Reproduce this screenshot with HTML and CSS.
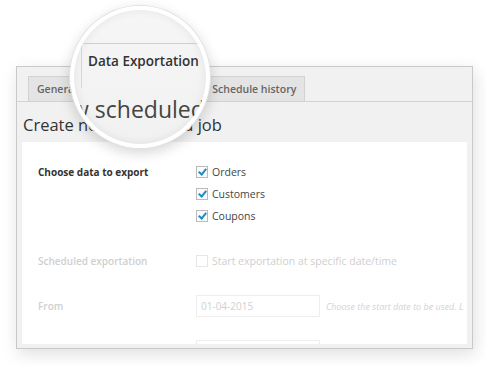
FILE: index.html
```html
<!DOCTYPE html>
<html lang="en">
<head>
    <meta charset="UTF-8" />
    <meta name="viewport" content="width=device-width, initial-scale=1.0"/>
    <title>Data Exportation</title>
    <link rel="stylesheet" href="styles.css">
</head>
<body>
<div class="stage">
    <div class="window">
        <div class="tabs">
            <span class="tab">General</span>
            <span class="tab active">Data Exportation</span>
            <span class="tab">Schedule history</span>
        </div>

        <h2 class="title">Create new scheduled job</h2>

        <div class="panel">
            <div class="row">
                <div class="row-label">Choose data to export</div>
                <div class="checks">
                    <label class="check"><span class="box checked"></span>Orders</label>
                    <label class="check"><span class="box checked"></span>Customers</label>
                    <label class="check"><span class="box checked"></span>Coupons</label>
                </div>
            </div>

            <div class="row faded">
                <div class="row-label">Scheduled exportation</div>
                <label class="check"><span class="box"></span>Start exportation at specific date/time</label>
            </div>

            <div class="row faded">
                <div class="row-label">From</div>
                <div class="field">
                    <span class="date-input">01-04-2015</span>
                    <em class="hint">Choose the start date to be used. L</em>
                </div>
            </div>

            <div class="row faded">
                <div class="row-label"></div>
                <div class="field">
                    <span class="date-input"></span>
                </div>
            </div>
        </div>
    </div>

    <!-- magnifier over the active tab -->
    <div class="lens">
        <div class="lens-bar">
            <div class="lens-tab">Data Exportation</div>
        </div>
        <div class="lens-title">new scheduled job</div>
    </div>
</div>
</body>
</html>
```

FILE: styles.css
```css
body {
  margin: 0;
  background: #fff;
  font-family: 'Open Sans', sans-serif;
  color: #333;
}

.stage {
  position: relative;
  width: 486px;
  height: 365px;
  padding: 66px 0 0 16px;
  box-sizing: border-box;
}

.window {
  width: 457px;
  height: 283px;
  box-sizing: border-box;
  border: 1px solid #c9c9c9;
  background: #f1f1f1;
  box-shadow: 2px 5px 16px rgba(0,0,0,0.13);
  overflow: hidden;
}

.tabs {
  display: flex;
  gap: 5px;
  margin-top: 9px;
  padding-left: 11px;
  border-bottom: 1px solid #d2d2d2;
}

.tab {
  padding: 4px 8px;
  font-size: 10.5px;
  line-height: 16px;
  font-weight: 600;
  color: #666;
  background: #e4e4e4;
  border: 1px solid #d2d2d2;
  border-bottom: none;
}

.tab.active {
  background: #f1f1f1;
  color: #333;
  margin-bottom: -1px;
  margin-right: 3px;
}

.title {
  margin: 10px 0 0 6px;
  font-size: 16.5px;
  line-height: 26px;
  font-weight: 400;
  color: #333;
}

.panel {
  margin: 4px 5px 0;
  height: 202px;
  background: #fff;
  padding: 19px 0 0 16px;
  box-sizing: border-box;
  overflow: hidden;
}

.row {
  display: grid;
  grid-template-columns: 158px 1fr;
  margin-bottom: 23px;
}

.row-label {
  font-size: 10px;
  line-height: 22px;
  font-weight: 700;
  color: #333;
}

.check {
  display: flex;
  align-items: center;
  gap: 4px;
  height: 22px;
  font-size: 10.5px;
  color: #444;
}

.box {
  width: 10px;
  height: 10px;
  border: 1px solid #bbb;
  background: #fafafa;
  position: relative;
}

.box.checked::after {
  content: "";
  position: absolute;
  left: 3px;
  top: 0px;
  width: 3px;
  height: 6px;
  border: solid #1e8cbe;
  border-width: 0 2px 2px 0;
  transform: rotate(40deg);
}

.faded .row-label {
  color: #cfcfcf;
  font-weight: 600;
}

.faded .check {
  color: #cfcfcf;
}

.faded .box {
  border-color: #e6e6e6;
  background: #fff;
}

.field {
  display: flex;
  align-items: center;
  gap: 6px;
  white-space: nowrap;
}

.date-input {
  width: 124px;
  height: 22px;
  box-sizing: border-box;
  border: 1px solid #eee;
  padding: 0 4px;
  font-size: 10px;
  line-height: 20px;
  color: #d0d0d0;
}

.hint {
  font-size: 9px;
  color: #d3d3d3;
}

.lens {
  position: absolute;
  left: 70px;
  top: 6px;
  width: 140px;
  height: 142px;
  border-radius: 50%;
  border: 4px solid #fff;
  box-sizing: border-box;
  overflow: hidden;
  background: linear-gradient(#f6f6f6, #f1f1f1);
  box-shadow: 0 0 0 1px #e2e2e2, 0 4px 14px rgba(0,0,0,0.18), inset 0 0 10px rgba(0,0,0,0.08);
}

.lens-bar {
  margin-top: 33px;
  border-top: 1px solid #cfcfcf;
  height: 44px;
}

.lens-tab {
  margin-left: 7px;
  height: 100%;
  padding: 8px 0 0 6px;
  box-sizing: border-box;
  border-left: 1px solid #d6d6d6;
  font-size: 13.5px;
  font-weight: 600;
  color: #333;
  white-space: nowrap;
}

.lens-title {
  margin: 6px 0 0 -30px;
  font-size: 23px;
  line-height: 30px;
  color: #444;
  white-space: nowrap;
}
```
